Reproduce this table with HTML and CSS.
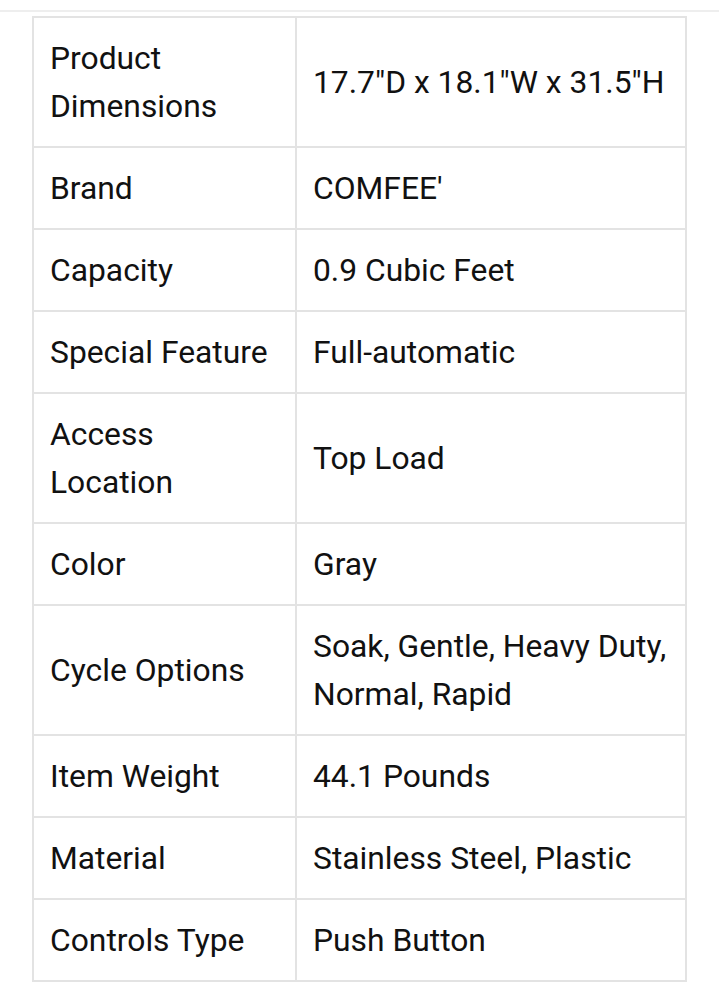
FILE: index.html
```html
<!DOCTYPE html>
<html>
<head>
<meta charset="utf-8">
<link rel="stylesheet" href="styles.css">
</head>
<body>
<div class="rule"></div>
<table class="specs">
  <tr><td class="key">Product Dimensions</td><td class="val">17.7"D x 18.1"W x 31.5"H</td></tr>
  <tr><td class="key">Brand</td><td class="val">COMFEE'</td></tr>
  <tr><td class="key">Capacity</td><td class="val">0.9 Cubic Feet</td></tr>
  <tr><td class="key">Special Feature</td><td class="val">Full-automatic</td></tr>
  <tr><td class="key">Access Location</td><td class="val">Top Load</td></tr>
  <tr><td class="key">Color</td><td class="val">Gray</td></tr>
  <tr><td class="key">Cycle Options</td><td class="val">Soak, Gentle, Heavy Duty, Normal, Rapid</td></tr>
  <tr><td class="key">Item Weight</td><td class="val">44.1 Pounds</td></tr>
  <tr><td class="key">Material</td><td class="val">Stainless Steel, Plastic</td></tr>
  <tr><td class="key">Controls Type</td><td class="val">Push Button</td></tr>
</table>
</body>
</html>
```
FILE: styles.css
```css
html, body {
  margin: 0;
  padding: 0;
  background: #ffffff;
}
body {
  font-family: Roboto, "Noto Sans", sans-serif;
  color: #111111;
}
.rule {
  height: 2px;
  background: #eeeeee;
  margin-top: 10px;
}
.specs {
  border-collapse: collapse;
  margin: 4px 0 0 32px;
  width: 655px;
  table-layout: fixed;
}
.specs td {
  border: 2px solid #e3e3e3;
  padding: 16px 17px 16px 16px;
  font-size: 31.8px;
  line-height: 48px;
  vertical-align: middle;
}
.specs .key {
  width: 228px;
}
.specs .val {
  padding-right: 8px;
}
```
